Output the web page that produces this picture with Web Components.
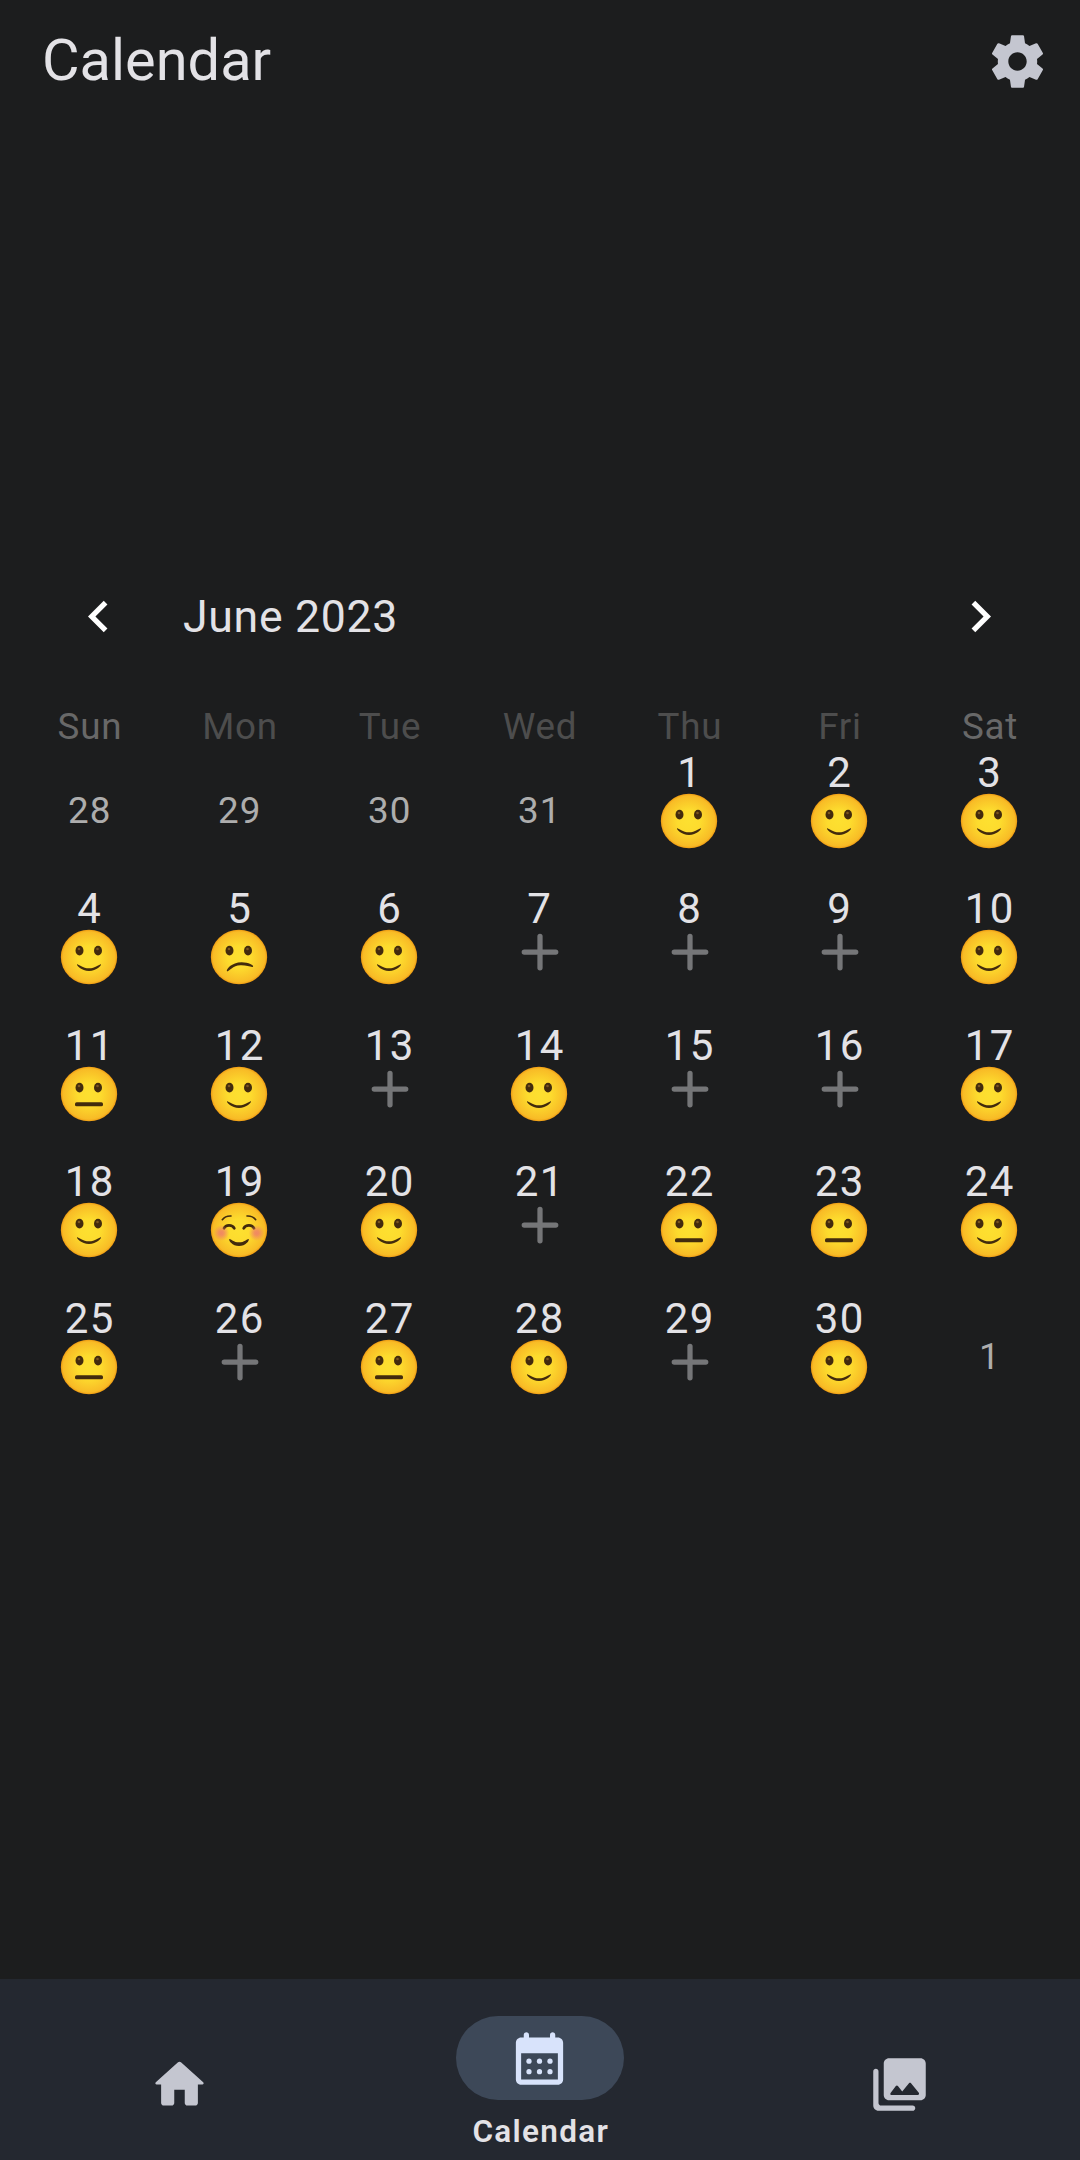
<!DOCTYPE html>
<html lang="en">
<head>
<meta charset="utf-8">
<title>Calendar</title>
<style>
html,body{margin:0;padding:0;background:#1c1d1e}
body{font-family:Roboto,"Liberation Sans",sans-serif;color:#e3e2e6}
</style>
</head>
<body>
<mood-app></mood-app>
<script>
const define = (name, html) => {
  const t = document.createElement('template');
  t.innerHTML = html;
  customElements.define(name, class extends HTMLElement {
    constructor() {
      super();
      this.attachShadow({mode: 'open'}).append(t.content.cloneNode(true));
    }
  });
};

const ICONS = {
  settings: '<path d="M19.43 12.98c.04-.32.07-.64.07-.98s-.03-.66-.07-.98l2.11-1.65c.19-.15.24-.42.12-.64l-2-3.46c-.12-.22-.39-.3-.61-.22l-2.49 1c-.52-.4-1.08-.73-1.69-.98l-.38-2.65C14.46 2.18 14.25 2 14 2h-4c-.25 0-.46.18-.49.42l-.38 2.65c-.61.25-1.17.59-1.69.98l-2.49-1c-.23-.09-.49 0-.61.22l-2 3.46c-.13.22-.07.49.12.64l2.11 1.65c-.04.32-.07.65-.07.98s.03.66.07.98l-2.11 1.65c-.19.15-.24.42-.12.64l2 3.46c.12.22.39.3.61.22l2.49-1c.52.4 1.08.73 1.69.98l.38 2.65c.03.24.24.42.49.42h4c.25 0 .46-.18.49-.42l.38-2.65c.61-.25 1.17-.59 1.69-.98l2.49 1c.23.09.49 0 .61-.22l2-3.46c.12-.22.07-.49-.12-.64l-2.11-1.65zM12 15.5c-1.93 0-3.5-1.57-3.5-3.5s1.57-3.5 3.5-3.5 3.5 1.57 3.5 3.5-1.57 3.5-3.5 3.5z"/>',
  prev: '<path d="M15.41 7.41L14 6l-6 6 6 6 1.41-1.41L10.83 12z"/>',
  next: '<path d="M10 6L8.59 7.41 13.17 12l-4.58 4.59L10 18l6-6z"/>',
  home: '<path d="M10 19v-5h4v5c0 .55.45 1 1 1h3c.55 0 1-.45 1-1v-7h1.7c.46 0 .68-.57.33-.87L12.67 3.6c-.38-.34-.96-.34-1.34 0l-8.36 7.53c-.34.3-.13.87.33.87H5v7c0 .55.45 1 1 1h3c.55 0 1-.45 1-1z"/>',
  calendar: '<path fill-rule="evenodd" d="M8 4V3c0-.55-.45-1-1-1s-1 .45-1 1v1H5c-1.11 0-2 .9-2 2v14c0 1.1.89 2 2 2h14c1.1 0 2-.9 2-2V6c0-1.1-.9-2-2-2h-1V3c0-.55-.45-1-1-1s-1 .45-1 1v1zM5 10h14v10H5z"/><circle cx="8" cy="13" r="1"/><circle cx="12" cy="13" r="1"/><circle cx="16" cy="13" r="1"/><circle cx="8" cy="17" r="1"/><circle cx="12" cy="17" r="1"/><circle cx="16" cy="17" r="1"/>',
  gallery: '<path d="M22 16V4c0-1.1-.9-2-2-2H8c-1.1 0-2 .9-2 2v12c0 1.1.9 2 2 2h12c1.1 0 2-.9 2-2zm-10.6-3.47l1.63 2.18 2.58-3.22c.2-.25.58-.25.78 0l2.96 3.7c.26.33.03.81-.39.81H9c-.41 0-.65-.47-.4-.8l2-2.67c.2-.26.6-.26.8 0zM2 7v13c0 1.1.9 2 2 2h13c.55 0 1-.45 1-1s-.45-1-1-1H5c-.55 0-1-.45-1-1V7c0-.55-.45-1-1-1s-1 .45-1 1z"/>'
};

customElements.define('ui-icon', class extends HTMLElement {
  constructor() { super(); this.attachShadow({mode: 'open'}); }
  connectedCallback() {
    this.shadowRoot.innerHTML = `<style>:host{display:block;width:63px;height:63px;flex:none}svg{display:block;width:100%;height:100%;fill:currentColor}</style><svg viewBox="0 0 24 24">${ICONS[this.getAttribute('name')]}</svg>`;
  }
});

/* Faces are drawn on a centred canvas, three units to a pixel. */
const EYES = '<ellipse cx="-28.5" cy="-19" rx="12" ry="14.5" fill="#422b0d"/><ellipse cx="27" cy="-19" rx="12" ry="14.5" fill="#422b0d"/><ellipse cx="-30" cy="-24" rx="4" ry="4" fill="#7a5520"/><ellipse cx="25.5" cy="-24" rx="4" ry="4" fill="#7a5520"/>';
const FACES = {
  smile: EYES + '<path fill="#422b0d" d="M-36 22C-38 25-23 42 0 42S38 25 36 22C34 19 20 34 0 34S-34 19-36 22z"/>',
  confused: EYES + '<path fill="#422b0d" d="M-36 43C-40 38-22 16 8 16 28 16 46 26 42 29 38 32 22 24 4 25-20 26-32 46-36 43z"/>',
  neutral: EYES + '<rect x="-42" y="25" width="84" height="12" rx="5" fill="#422b0d"/>',
  blush: '<g fill="none" stroke="#422b0d" stroke-linecap="round"><path stroke-width="8" d="M-45-5C-40-17-20-17-14-5M14-5C20-17 40-17 45-5"/><path stroke-width="5" d="M-50-31Q-41-43-24-42M24-42Q41-43 50-31"/></g><path fill="#422b0d" d="M-29 27C-32 32-20 48 0 48S32 32 29 27C26 25 17 37 0 37S-26 25-29 27z"/><circle cx="-53" cy="9" r="24" fill="url(#c)"/><circle cx="53" cy="9" r="24" fill="url(#c)"/>'
};

customElements.define('mood-face', class extends HTMLElement {
  constructor() { super(); this.attachShadow({mode: 'open'}); }
  connectedCallback() {
    this.shadowRoot.innerHTML = `<style>:host{display:block;width:58px;height:56px}svg{display:block}</style>
<svg width="58" height="56" viewBox="-87 -84 174 168"><defs>
<radialGradient id="f"><stop offset="0" stop-color="#fde030"/><stop offset=".4" stop-color="#fddc2e"/><stop offset=".92" stop-color="#f8bb26"/><stop offset="1" stop-color="#ee9a12"/></radialGradient>
<radialGradient id="c"><stop offset="0" stop-color="#ed7770" stop-opacity=".8"/><stop offset=".3" stop-color="#ed7770" stop-opacity=".7"/><stop offset="1" stop-color="#ed7770" stop-opacity="0"/></radialGradient></defs>
<ellipse rx="84.5" ry="82" fill="url(#f)"/>${FACES[this.getAttribute('mood')]}</svg>`;
  }
});

customElements.define('calendar-day', class extends HTMLElement {
  constructor() { super(); this.attachShadow({mode: 'open'}); }
  connectedCallback() {
    const mood = this.getAttribute('mood');
    const mark = mood === 'out' ? '' : mood === 'none'
      ? '<svg class="plus" viewBox="4 4 16 16"><path d="M12 6v12M6 12h12"/></svg>'
      : `<mood-face mood="${mood}"></mood-face>`;
    this.shadowRoot.innerHTML = `<style>
:host{display:flex;flex-direction:column;align-items:center;font-size:42px;line-height:44px;letter-spacing:1.3px}
:host([mood=out]){font-size:36.75px;line-height:120px;letter-spacing:1px;color:#adadad}
.n{padding-left:1.5px}
mood-face{margin-top:-2px}
.plus{width:42px;height:42px;margin-left:2px;fill:none;stroke:#757678;stroke-width:2;stroke-linecap:round}
</style><span class="n"><slot></slot></span>${mark}`;
  }
});

const WEEKS = [
  ['28 out','29 out','30 out','31 out','1 smile','2 smile','3 smile'],
  ['4 smile','5 confused','6 smile','7 none','8 none','9 none','10 smile'],
  ['11 neutral','12 smile','13 none','14 smile','15 none','16 none','17 smile'],
  ['18 smile','19 blush','20 smile','21 none','22 neutral','23 neutral','24 smile'],
  ['25 neutral','26 none','27 neutral','28 smile','29 none','30 smile','1 out']
];

define('month-calendar', `<style>
:host{display:block}
header{display:flex;align-items:center;height:171.5px;padding:0 68.5px 0 67px;color:#fff}
h2{flex:1;margin:0;padding:1px 0 0 53px;font-weight:400;font-size:44.6px;letter-spacing:.7px;color:#e3e2e6}
.days,.weeks{display:grid;grid-template-columns:repeat(7,150px);justify-content:center;padding-right:2px}
.days{height:48.8px;line-height:50.4px;font-size:36.75px;letter-spacing:.8px;text-align:center;color:#4d4d4d}
.days span{padding-left:2px}
.days span:first-child,.days span:last-child{color:#686868}
.weeks{grid-auto-rows:136.5px}
</style>
<header><ui-icon name="prev"></ui-icon><h2><slot></slot></h2><ui-icon name="next"></ui-icon></header>
<div class="days"><span>Sun</span><span>Mon</span><span>Tue</span><span>Wed</span><span>Thu</span><span>Fri</span><span>Sat</span></div>
<div class="weeks">${WEEKS.flat().map(d => { const [n, m] = d.split(' '); return `<calendar-day mood="${m}">${n}</calendar-day>`; }).join('')}</div>`);

define('app-header', `<style>
:host{display:flex;justify-content:space-between;align-items:center;height:123px;padding:0 31.5px 0 42px}
h1{margin:0;font-weight:400;font-size:57.75px;line-height:120px;margin-top:-4px;color:#e3e2e6}
ui-icon{color:#c4c6d0}
</style><h1><slot></slot></h1><ui-icon name="settings"></ui-icon>`);

define('nav-item', `<style>
:host{flex:1;display:flex;flex-direction:column;align-items:center;justify-content:center;color:#c4c6d0}
:host([active]){color:#e3e2e6;justify-content:flex-start;padding-top:37px}
.pill{display:flex;align-items:center;justify-content:center;width:168px;height:84px;border-radius:42px}
:host([active]) .pill{background:#3d4858;color:#d8e3fb}
.label{font-size:31.5px;line-height:42px;font-weight:600;letter-spacing:1.3px;margin-top:11px;padding-left:1.5px}
::slotted(ui-icon){margin-right:1px}
:host(:not([active])) .label{display:none}
</style><div class="pill"><slot name="icon"></slot></div><div class="label"><slot></slot></div>`);

define('bottom-nav', `<style>
:host{display:flex;height:181px;background:#242830}
nav{display:flex;width:100%;height:210px}
</style><nav>
<nav-item><ui-icon slot="icon" name="home"></ui-icon></nav-item>
<nav-item active><ui-icon slot="icon" name="calendar"></ui-icon>Calendar</nav-item>
<nav-item><ui-icon slot="icon" name="gallery"></ui-icon></nav-item></nav>`);

define('mood-app', `<style>
:host{display:flex;flex-direction:column;width:1080px;height:2160px;overflow:hidden;background:#1c1d1e}
main{flex:1;padding-top:407.7px}
</style><app-header>Calendar</app-header><main><month-calendar>June 2023</month-calendar></main><bottom-nav></bottom-nav>`);
</script>
</body>
</html>
